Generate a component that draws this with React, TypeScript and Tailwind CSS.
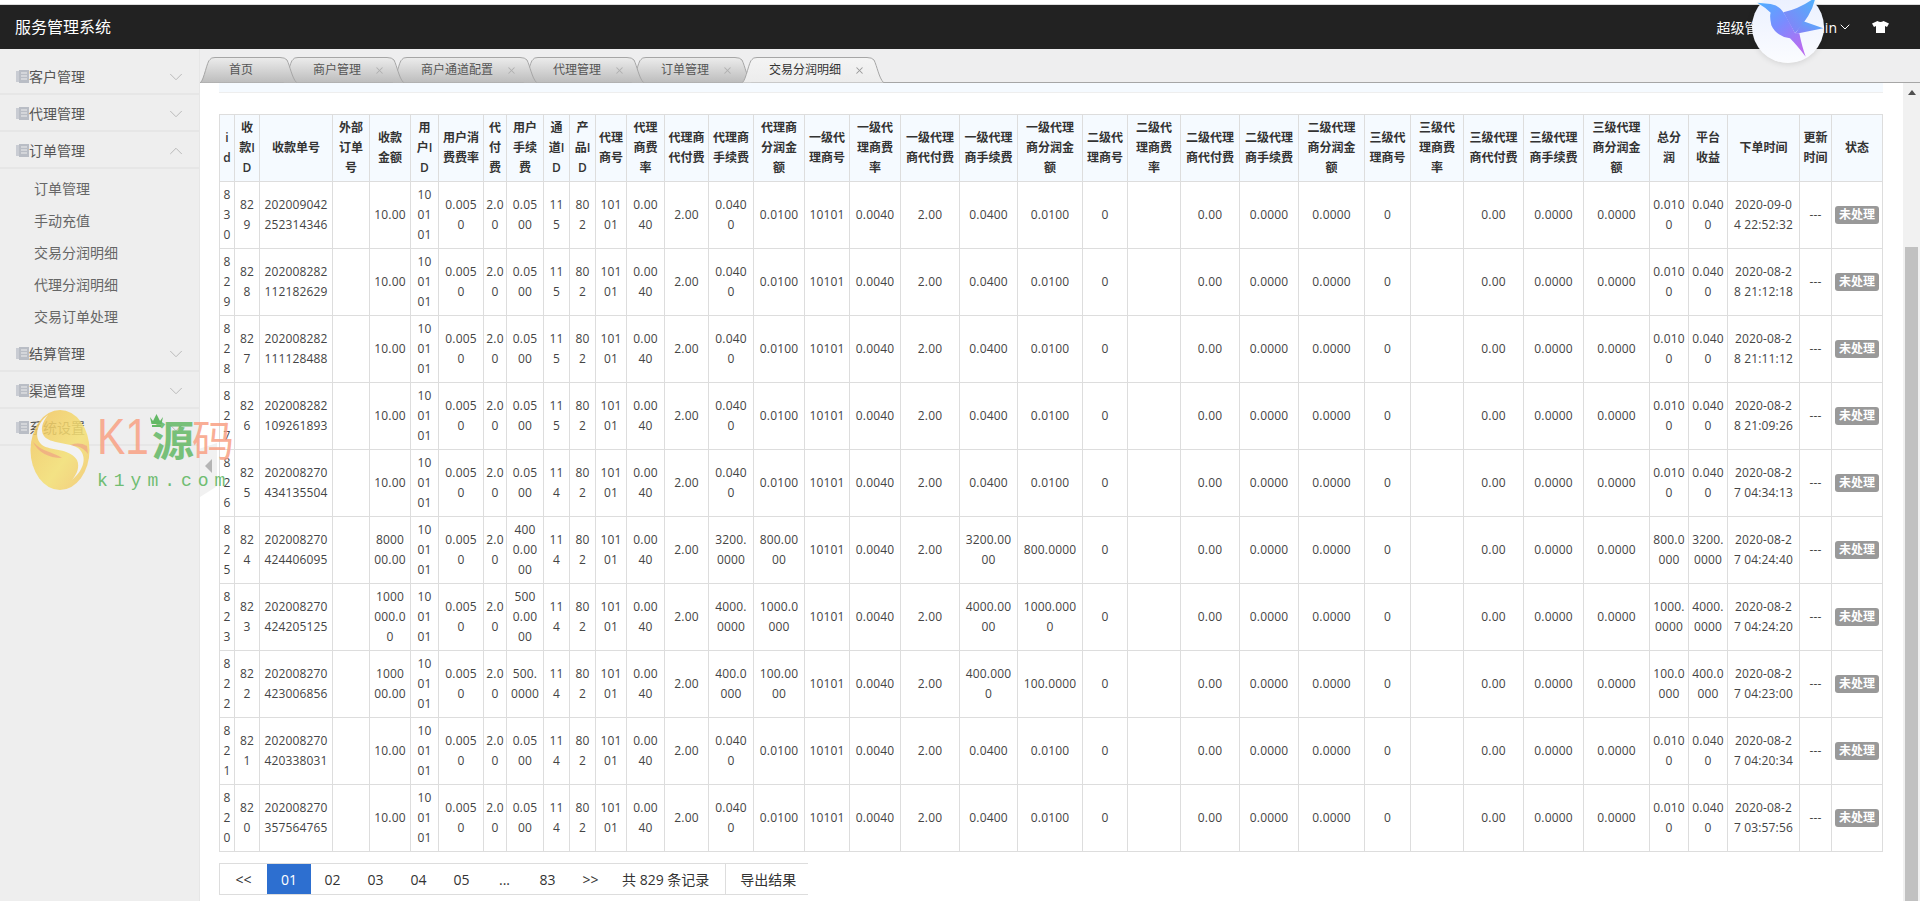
import { ChevronDown, ChevronUp, X } from "lucide-react";

type Tab = { name: string; width: number; className: string; active?: boolean; closable?: boolean };

const tabs: Tab[] = [
  { name: "首页", width: 97, className: "z-[6] w-[97px] pl-[29px]" },
  { name: "商户管理", width: 121, className: "z-[5] -ml-[14px] w-[121px] pl-[30px]", closable: true },
  { name: "商户通道配置", width: 145, className: "z-[4] -ml-[12px] w-[145px] pl-[29px]", closable: true },
  { name: "代理管理", width: 121, className: "z-[3] -ml-[14px] w-[121px] pl-[30px]", closable: true },
  { name: "订单管理", width: 121, className: "z-[2] -ml-[13px] w-[121px] pl-[30px]", closable: true },
  { name: "交易分润明细", width: 142, className: "z-[7] -ml-[10px] w-[142px] pl-[27px]", closable: true, active: true },
];

const menu = [
  { name: "客户管理" },
  { name: "代理管理" },
  { name: "订单管理", children: ["订单管理", "手动充值", "交易分润明细", "代理分润明细", "交易订单处理"] },
  { name: "结算管理" },
  { name: "渠道管理" },
  { name: "系统设置" },
];

// pad differs per column so numbers wrap where the original table wraps them
const columns = [
  { title: "id", width: "w-[15px]", pad: "px-[3px]" },
  { title: "收款ID", width: "w-[25px]", pad: "px-[3px]" },
  { title: "收款单号", width: "w-[73px]", pad: "px-[3px]" },
  { title: "外部订单号", width: "w-[37px]", pad: "px-[3px]" },
  { title: "收款金额", width: "w-[41px]", pad: "px-[3px]" },
  { title: "用户ID", width: "w-[28px]", pad: "px-[4px]" },
  { title: "用户消费费率", width: "w-[45px]", pad: "px-[4px]" },
  { title: "代付费", width: "w-[23px]", pad: "px-[2px]" },
  { title: "用户手续费", width: "w-[37px]", pad: "px-[3px]" },
  { title: "通道ID", width: "w-[26px]", pad: "px-[3px]" },
  { title: "产品ID", width: "w-[26px]", pad: "px-[3px]" },
  { title: "代理商号", width: "w-[31px]", pad: "px-[3px]" },
  { title: "代理商费率", width: "w-[38px]", pad: "px-[4px]" },
  { title: "代理商代付费", width: "w-[44px]", pad: "px-[3px]" },
  { title: "代理商手续费", width: "w-[45px]", pad: "px-[4px]" },
  { title: "代理商分润金额", width: "w-[51px]", pad: "px-[3px]" },
  { title: "一级代理商号", width: "w-[45px]", pad: "px-[3px]" },
  { title: "一级代理商费率", width: "w-[51px]", pad: "px-[3px]" },
  { title: "一级代理商代付费", width: "w-[59px]", pad: "px-[3px]" },
  { title: "一级代理商手续费", width: "w-[58px]", pad: "px-[3px]" },
  { title: "一级代理商分润金额", width: "w-[65px]", pad: "px-[3px]" },
  { title: "二级代理商号", width: "w-[45px]", pad: "px-[3px]" },
  { title: "二级代理商费率", width: "w-[53px]", pad: "px-[3px]" },
  { title: "二级代理商代付费", width: "w-[59px]", pad: "px-[3px]" },
  { title: "二级代理商手续费", width: "w-[59px]", pad: "px-[3px]" },
  { title: "二级代理商分润金额", width: "w-[66px]", pad: "px-[3px]" },
  { title: "三级代理商号", width: "w-[46px]", pad: "px-[3px]" },
  { title: "三级代理商费率", width: "w-[53px]", pad: "px-[3px]" },
  { title: "三级代理商代付费", width: "w-[60px]", pad: "px-[3px]" },
  { title: "三级代理商手续费", width: "w-[60px]", pad: "px-[3px]" },
  { title: "三级代理商分润金额", width: "w-[66px]", pad: "px-[3px]" },
  { title: "总分润", width: "w-[39px]", pad: "px-[3px]" },
  { title: "平台收益", width: "w-[39px]", pad: "px-[3px]" },
  { title: "下单时间", width: "w-[72px]", pad: "px-[4px]" },
  { title: "更新时间", width: "w-[32px]", pad: "px-[3px]" },
  { title: "状态", width: "w-[51px]", pad: "px-[3px]" },
];

const small = { fee: "0.0500", agentFee: "0.0400", agentProfit: "0.0100", platform: "0.0400", total: "0.0100" };

const orders = [
  { id: "830", pid: "829", no: "202009042252314346", amount: "10.00", channel: "115", time: "2020-09-04 22:52:32", ...small },
  { id: "829", pid: "828", no: "202008282112182629", amount: "10.00", channel: "115", time: "2020-08-28 21:12:18", ...small },
  { id: "828", pid: "827", no: "202008282111128488", amount: "10.00", channel: "115", time: "2020-08-28 21:11:12", ...small },
  { id: "827", pid: "826", no: "202008282109261893", amount: "10.00", channel: "115", time: "2020-08-28 21:09:26", ...small },
  { id: "826", pid: "825", no: "202008270434135504", amount: "10.00", channel: "114", time: "2020-08-27 04:34:13", ...small },
  {
    id: "825", pid: "824", no: "202008270424406095", amount: "800000.00", channel: "114", time: "2020-08-27 04:24:40",
    fee: "400\u200b0.0000", agentFee: "3200.0000", agentProfit: "800.0000", platform: "3200.0000", total: "800.0000",
  },
  {
    id: "823", pid: "823", no: "202008270424205125", amount: "1000000.00", channel: "114", time: "2020-08-27 04:24:20",
    fee: "500\u200b0.0000", agentFee: "4000.0000", agentProfit: "1000.0000", platform: "4000.0000", total: "1000.0000",
  },
  {
    id: "822", pid: "822", no: "202008270423006856", amount: "100000.00", channel: "114", time: "2020-08-27 04:23:00",
    fee: "500.0000", agentFee: "400.0000", agentProfit: "100.0000", platform: "400.0000", total: "100.0000",
  },
  { id: "821", pid: "821", no: "202008270420338031", amount: "10.00", channel: "114", time: "2020-08-27 04:20:34", ...small },
  { id: "820", pid: "820", no: "202008270357564765", amount: "10.00", channel: "114", time: "2020-08-27 03:57:56", ...small },
];

function TabShape({ width, active }: { width: number; active?: boolean }) {
  const h = 26;
  const id = active ? "tab-on" : `tab-off-${width}`;
  return (
    <svg className="absolute left-0 top-0" width={width} height={h}>
      <defs>
        <linearGradient id={id} x1="0" y1="0" x2="0" y2="1">
          <stop offset="0" stopColor={active ? "#f4f4f4" : "#ececec"} />
          <stop offset="1" stopColor={active ? "#ececec" : "#bdbdbd"} />
        </linearGradient>
      </defs>
      <path
        d={`M0.5 ${h - 0.5} C4 ${h - 3} 7 4 10 2.5 Q11 0.5 15 0.5 L${width - 17} 0.5 Q${width - 12} 0.5 ${width - 10} 3 C${width - 7} 9 ${width - 5} 21 ${width - 0.5} ${h - 0.5}`}
        fill={`url(#${id})`}
        stroke="#a6a6a6"
      />
    </svg>
  );
}

function MenuIcon() {
  return (
    <svg width="13" height="13" viewBox="0 0 13 13" className="shrink-0">
      <rect x="0" y="1" width="3" height="11" fill="#c9ccd3" />
      <rect x="3" y="0" width="10" height="13" fill="#b9bdc5" />
      <path d="M5 3h6M5 6h6M5 9h6" stroke="#eeeeee" strokeWidth="1" />
    </svg>
  );
}

function Sidebar() {
  return (
    <aside className="w-[200px] shrink-0 border-r border-[#e6e6e6] bg-[#eeeeee] pt-[9px] text-[14px] text-[#555]">
      {menu.map((item) => (
        <div key={item.name}>
          <div className="flex h-[37px] items-center justify-between border-b-2 border-[#e6e6e6] pl-[16px] pr-[12px] pt-[2px]">
            <span className="flex items-center">
              <MenuIcon />
              {item.name}
            </span>
            {item.children ? (
              <ChevronUp size={22} strokeWidth={1} color="#b5b5b5" />
            ) : (
              <ChevronDown size={22} strokeWidth={1} color="#b5b5b5" />
            )}
          </div>
          {item.children && (
            <ul className="pb-[3px] pt-[3px] text-[#666]">
              {item.children.map((child) => (
                <li key={child} className="flex h-[32px] items-center pl-[34px]">
                  {child}
                </li>
              ))}
            </ul>
          )}
        </div>
      ))}
    </aside>
  );
}

function OrderTable() {
  const cell = "border border-[#dddddd] py-[3px] text-center align-middle leading-[20px] break-all";
  return (
    <table className="w-[1664px] table-fixed border-collapse text-[12px] text-[#444]">
      <colgroup>
        {columns.map((col) => (
          <col key={col.title} className={col.width} />
        ))}
      </colgroup>
      <thead>
        <tr className="h-[67px] bg-[#f5faff] text-[#333]">
          {columns.map((col) => (
            <th key={col.title} className={`${cell} ${col.pad} font-semibold`}>
              {col.title}
            </th>
          ))}
        </tr>
      </thead>
      <tbody>
        {orders.map((o) => {
          const values = [
            o.id, o.pid, o.no, "", o.amount, "100101", "0.0050", "2.00", o.fee, o.channel, "802", "10101", "0.0040", "2.00",
            o.agentFee, o.agentProfit, "10101", "0.0040", "2.00", o.agentFee, o.agentProfit, "0", "", "0.00", "0.0000", "0.0000",
            "0", "", "0.00", "0.0000", "0.0000", o.total, o.platform, o.time, "---",
          ];
          return (
            <tr key={o.id} className="h-[67px] tracking-[0.14px]">
              {values.map((v, i) => (
                <td key={i} className={`${cell} ${columns[i].pad}`}>
                  {v}
                </td>
              ))}
              <td className={`${cell} px-[3px]`}>
                <span className="inline-block h-[18px] w-[44px] rounded-[3px] bg-[#999999] text-center text-[12px] font-semibold leading-[18px] tracking-normal text-white">
                  未处理
                </span>
              </td>
            </tr>
          );
        })}
      </tbody>
    </table>
  );
}

function Pagination() {
  const pages = ["02", "03", "04", "05", "...", "83", ">>"];
  return (
    <div className="mt-[11px] flex h-[32px] w-[589px] items-center border-y border-l border-[#dddddd] text-[14px] text-[#333]">
      <span className="flex h-full w-[47px] items-center justify-center">{"<<"}</span>
      <span className="flex h-full w-[44px] items-center justify-center bg-[#2d6fd0] text-white">01</span>
      {pages.map((p) => (
        <span key={p} className="flex h-full w-[43px] items-center justify-center">
          {p}
        </span>
      ))}
      <span className="ml-[10px] mr-[16px] shrink-0">共 829 条记录</span>
      <span className="flex h-full shrink-0 items-center border-l border-[#dddddd] pl-[14px]">导出结果</span>
    </div>
  );
}

function Bird() {
  return (
    <div className="absolute left-[1752px] top-[-9px] h-[72px] w-[72px] rounded-full bg-gradient-to-b from-[#e9efff] to-[#fbfcff] shadow-[0_1px_6px_rgba(0,0,0,0.12)]">
      <svg className="absolute left-[-12px] top-[9px] overflow-visible" width="90" height="60" viewBox="0 0 270 180">
        <defs>
          <linearGradient id="bird" x1="0" y1="0" x2="0.7" y2="1">
            <stop offset="0" stopColor="#4fb0ff" />
            <stop offset="0.5" stopColor="#7a8cff" />
            <stop offset="1" stopColor="#b96cf0" />
          </linearGradient>
          <linearGradient id="wing" x1="1" y1="0" x2="0" y2="1">
            <stop offset="0" stopColor="#4db2fb" />
            <stop offset="1" stopColor="#8d7cf7" />
          </linearGradient>
        </defs>
        <path d="M130 37 Q180 26 226 -8 Q218 42 165 100Z" fill="url(#wing)" />
        <path d="M190 64 L250 85 L165 102Z" fill="url(#wing)" />
        <path
          d="M52 8 L92 12 Q118 16 130 37 Q146 62 165 100 L178 100 Q186 140 197 170 Q170 135 150 115 Q108 108 94 76 Q88 50 92 38 Q76 22 52 8Z"
          fill="url(#bird)"
        />
      </svg>
    </div>
  );
}

function Watermark() {
  return (
    <div className="pointer-events-none absolute left-[30px] top-[410px] h-[80px] w-[205px]">
      <svg className="absolute left-0 top-0" width="60" height="80" viewBox="0 0 60 80">
        <defs>
          <linearGradient id="wm" x1="0" y1="0" x2="1" y2="1">
            <stop offset="0" stopColor="#f2c35d" />
            <stop offset="0.6" stopColor="#f4e072" />
            <stop offset="1" stopColor="#f3c56a" />
          </linearGradient>
        </defs>
        <ellipse cx="30" cy="40" rx="29.5" ry="40" fill="url(#wm)" fillOpacity="0.85" />
        <path d="M3 32 C8 42 18 48 32 48 C24 42 12 42 3 32Z" fill="#ee9a86" fillOpacity="0.6" />
        <path d="M34 38 C44 34 52 36 58 44 L57 36 C50 32 42 33 34 38Z" fill="#ee9a86" fillOpacity="0.6" />
        <path
          d="M18 5 C6 14 4 28 12 35 C20 41 40 38 47 50 C50 57 47 64 42 70 C54 60 58 46 48 38 C38 32 20 34 14 26 C10 20 12 12 18 5Z"
          fill="#f2f2f2"
        />
      </svg>
      <span className="absolute left-[67px] top-[2px] origin-left scale-x-[0.85] font-['Liberation_Sans',sans-serif] text-[50px] leading-[50px] text-[#f9a184] opacity-85">
        K1
      </span>
      <span className="absolute left-[122px] top-[6px] text-[42px] font-bold leading-[48px] text-[#63b865] opacity-85">源</span>
      <span className="absolute left-[162px] top-[6px] text-[42px] font-normal leading-[48px] text-[#f9a184] opacity-85">码</span>
      <span className="absolute left-[67px] top-[60px] font-['Liberation_Mono',monospace] text-[18px] leading-[22px] tracking-[6px] text-[#70bd72]">
        k1ym.com
      </span>
      <svg className="absolute left-[119px] top-[3px]" width="15" height="14" viewBox="0 0 15 14">
        <path d="M1 4 L4 8 L7.5 1 L11 8 L14 4 L12.5 11 H2.5Z M3 12 H12 V14 H3Z" fill="#63b865" />
      </svg>
    </div>
  );
}

export default function App() {
  return (
    <div className="relative flex h-[901px] w-full flex-col overflow-hidden bg-white font-['Open_Sans','Noto_Sans_CJK_SC',sans-serif]">
      <div className="h-[5px] shrink-0 border-b border-[#dddddd] bg-white" />
      <header className="flex h-[44px] shrink-0 items-center justify-between bg-[#222222] pl-[15px] pr-[31px] text-white">
        <span className="text-[16px]">服务管理系统</span>
        <div className="flex items-center text-[14px]">
          <span>超级管理员</span>
          <span className="ml-[9px]">admin</span>
          <ChevronDown size={16} strokeWidth={1.5} />
          <svg className="ml-[19px]" width="17" height="12" viewBox="0 0 17 12">
            <path d="M5.5 0 Q8.5 2 11.5 0 L17 2.5 L15 6 L13 5 V12 H4 V5 L2 6 L0 2.5Z" fill="#ffffff" />
          </svg>
        </div>
      </header>

      <div className="flex min-h-0 flex-1">
        <Sidebar />
        <main className="flex min-w-0 flex-1 flex-col">
          <nav className="flex h-[34px] shrink-0 items-start border-b border-[#a6a6a6] bg-[#eeeeef] pt-[8px]">
            {tabs.map((tab) => (
              <div key={tab.name} className={`relative flex h-[26px] shrink-0 items-center text-[12px] ${tab.className}`}>
                <TabShape width={tab.width} active={tab.active} />
                <span className={`relative ${tab.active ? "text-[#333]" : "text-[#555]"}`}>{tab.name}</span>
                {tab.closable && (
                  <X size={11} strokeWidth={2.2} color={tab.active ? "#999" : "#b0b0b0"} className="relative ml-[13px]" />
                )}
              </div>
            ))}
          </nav>
          <div className="flex min-h-0 flex-1">
            <div className="min-w-0 flex-1 pl-[19px]">
              <div className="flex h-[10px] w-[1664px] items-end overflow-hidden border-b border-[#eeeeee] bg-[#f5faff] pl-[34px]">
                <span className="mb-[7px] text-[12px] text-[#444]">查询</span>
              </div>
              <div className="mt-[21px]">
                <OrderTable />
              </div>
              <Pagination />
            </div>
            <div className="w-[17px] shrink-0 bg-[#f1f1f1] pt-[7px]">
              <div className="mx-auto h-0 w-0 border-x-[4px] border-b-[5px] border-x-transparent border-b-[#505050]" />
              <div className="mx-auto mt-[152px] h-[660px] w-[13px] bg-[#c1c1c1]" />
            </div>
          </div>
        </main>
      </div>

      <div className="absolute left-[200px] top-[443px] h-[54px] w-[17px] bg-[#eeeeee] opacity-80 [clip-path:polygon(0_10%,100%_0,100%_80%,0_100%)]" />
      <div className="absolute left-[205px] top-[459px] h-0 w-0 border-y-[7px] border-r-[7px] border-y-transparent border-r-[#b5b5b5]" />
      <Watermark />
      <Bird />
    </div>
  );
}
